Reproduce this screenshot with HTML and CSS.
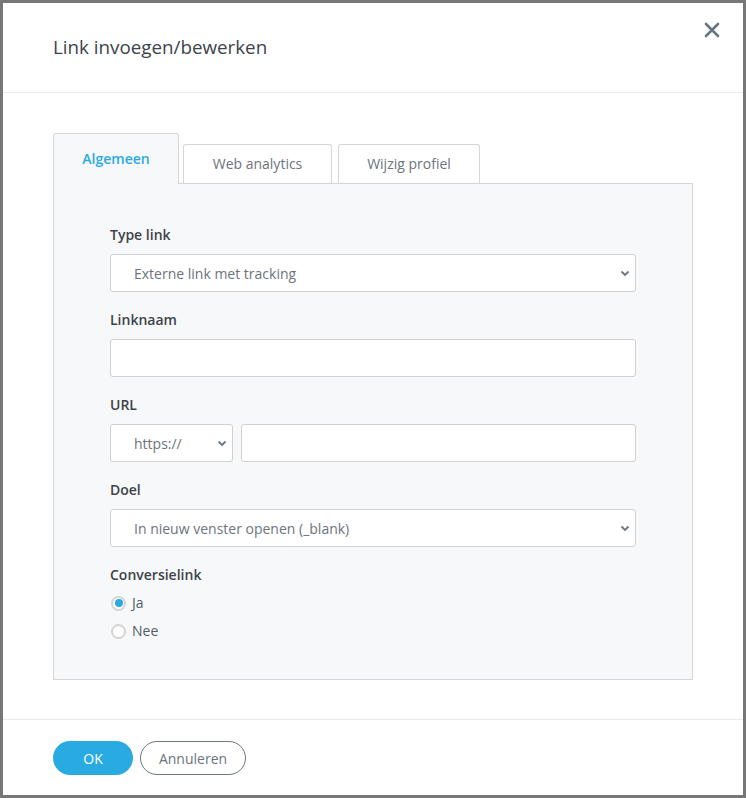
FILE: index.html
```html
<!DOCTYPE html>
<html lang="nl">
<head>
<meta charset="utf-8">
<title>Link invoegen/bewerken</title>
<link rel="stylesheet" href="styles.css">
</head>
<body>
<div class="backdrop">
  <div class="modal">
    <div class="modal-header">
      <h1 class="modal-title">Link invoegen/bewerken</h1>
      <button class="close" aria-label="Sluiten">
        <svg width="16" height="16" viewBox="0 0 16 16"><path d="M2 2L14 14M14 2L2 14" stroke="#6a7682" stroke-width="2.6" stroke-linecap="round"/></svg>
      </button>
    </div>
    <div class="modal-body">
      <div class="tabs">
        <div class="tab active">Algemeen</div>
        <div class="tab tab-wa">Web analytics</div>
        <div class="tab tab-wp">Wijzig profiel</div>
      </div>
      <div class="panel">
        <div class="group">
          <label class="label">Type link</label>
          <div class="select-wrap">
            <select class="control select"><option>Externe link met tracking</option></select>
            <svg class="chev" width="10" height="7" viewBox="0 0 10 7"><path d="M1.5 1.5L5 5L8.5 1.5" fill="none" stroke="#6c7580" stroke-width="1.8"/></svg>
          </div>
        </div>
        <div class="group">
          <label class="label">Linknaam</label>
          <input class="control" type="text">
        </div>
        <div class="group">
          <label class="label">URL</label>
          <div class="url-row">
            <div class="select-wrap proto">
              <select class="control select"><option>https://</option></select>
              <svg class="chev" width="10" height="7" viewBox="0 0 10 7"><path d="M1.5 1.5L5 5L8.5 1.5" fill="none" stroke="#6c7580" stroke-width="1.8"/></svg>
            </div>
            <input class="control url" type="text">
          </div>
        </div>
        <div class="group">
          <label class="label">Doel</label>
          <div class="select-wrap">
            <select class="control select"><option>In nieuw venster openen (_blank)</option></select>
            <svg class="chev" width="10" height="7" viewBox="0 0 10 7"><path d="M1.5 1.5L5 5L8.5 1.5" fill="none" stroke="#6c7580" stroke-width="1.8"/></svg>
          </div>
        </div>
        <div class="group last">
          <label class="label">Conversielink</label>
          <div class="radio-row"><span class="radio checked"></span><span class="radio-text">Ja</span></div>
          <div class="radio-row"><span class="radio"></span><span class="radio-text">Nee</span></div>
        </div>
      </div>
    </div>
    <div class="modal-footer">
      <button class="btn btn-primary">OK</button>
      <button class="btn btn-outline">Annuleren</button>
    </div>
  </div>
</div>
</body>
</html>
```
FILE: styles.css
```css
* { box-sizing: border-box; }
html, body { margin: 0; padding: 0; }
body {
  background: #777777;
  font-family: "Open Sans", "Noto Sans", sans-serif;
  width: 746px;
  height: 798px;
  overflow: hidden;
}
.backdrop {
  padding: 3px 3px 3px 3px;
}
.modal {
  width: 740px;
  height: 792px;
  background: #ffffff;
  display: flex;
  flex-direction: column;
}
.modal-header {
  height: 90px;
  border-bottom: 1px solid #e9eaec;
  display: flex;
  align-items: flex-start;
  justify-content: space-between;
  padding: 0 23px 0 50px;
  flex: none;
}
.modal-title {
  margin: 0;
  margin-top: 32px;
  font-size: 18.8px;
  font-weight: 400;
  line-height: 24px;
  color: #3c434b;
}
.close {
  margin-top: 19px;
  background: none;
  border: 0;
  padding: 0;
  width: 16px;
  height: 16px;
  cursor: pointer;
}
.modal-body {
  padding: 40px 50px 0 50px;
  height: 627px;
  border-bottom: 1px solid #e9eaec;
  flex: none;
}
.tabs {
  display: flex;
  align-items: flex-end;
  height: 50px;
  position: relative;
  z-index: 1;
}
.tab {
  height: 39px;
  border: 1px solid #d6d6d6;
  border-bottom: 0;
  border-radius: 3px 3px 0 0;
  background: #ffffff;
  color: #6c747d;
  font-size: 14px;
  display: flex;
  align-items: center;
  justify-content: center;
  line-height: 20px;
}
.tab.active {
  height: 51px;
  width: 126px;
  background: #f7f8fa;
  color: #29abe2;
  font-weight: 600;
  align-items: flex-start;
  padding-top: 15px;
  margin-bottom: -1px;
}
.tab-wa { width: 149px; margin-left: 4px; }
.tab-wp { width: 142px; margin-left: 6px; }
.panel {
  background: #f7f8fa;
  border: 1px solid #d6d6d6;
  height: 497px;
  padding: 41px 56px 0 56px;
}
.group {
  margin-bottom: 18px;
}
.label {
  display: block;
  font-size: 14px;
  font-weight: 600;
  line-height: 20px;
  color: #3d4349;
  margin-bottom: 9px;
}
.control {
  display: block;
  width: 100%;
  height: 38px;
  border: 1px solid #d0d0d0;
  border-radius: 3px;
  background: #ffffff;
  font-family: "Open Sans", "Noto Sans", sans-serif;
  font-size: 14px;
  color: #6c747d;
  padding: 0 0 0 23px;
  margin: 0;
  outline: none;
}
.select {
  appearance: none;
  -webkit-appearance: none;
}
.select-wrap {
  position: relative;
}
.chev {
  position: absolute;
  right: 6px;
  top: 16px;
  pointer-events: none;
}
.url-row {
  display: flex;
  gap: 8px;
}
.proto { width: 123px; flex: none; }
.url { flex: 1; }
.last .label { margin-bottom: 4px; }
.radio-row {
  display: flex;
  align-items: center;
  height: 28px;
}
.radio {
  width: 15px;
  height: 15px;
  border-radius: 50%;
  border: 2px solid #d5d5d5;
  background: #ffffff;
  margin-left: 1px;
  margin-right: 6px;
  position: relative;
}
.radio.checked::after {
  content: "";
  position: absolute;
  left: 1.5px;
  top: 1.5px;
  width: 8px;
  height: 8px;
  border-radius: 50%;
  background: #29abe2;
}
.radio-text {
  font-size: 14px;
  color: #545b63;
  line-height: 20px;
}
.modal-footer {
  display: flex;
  gap: 7px;
  padding: 21px 50px 0 50px;
}
.btn {
  height: 34px;
  border-radius: 17px;
  font-family: "Open Sans", "Noto Sans", sans-serif;
  font-size: 14px;
  padding: 0;
  cursor: pointer;
}
.btn-primary {
  width: 80px;
  background: #29abe2;
  border: 0;
  color: #ffffff;
}
.btn-outline {
  width: 106px;
  background: #ffffff;
  border: 1px solid #6d757d;
  color: #6c747d;
}
```
